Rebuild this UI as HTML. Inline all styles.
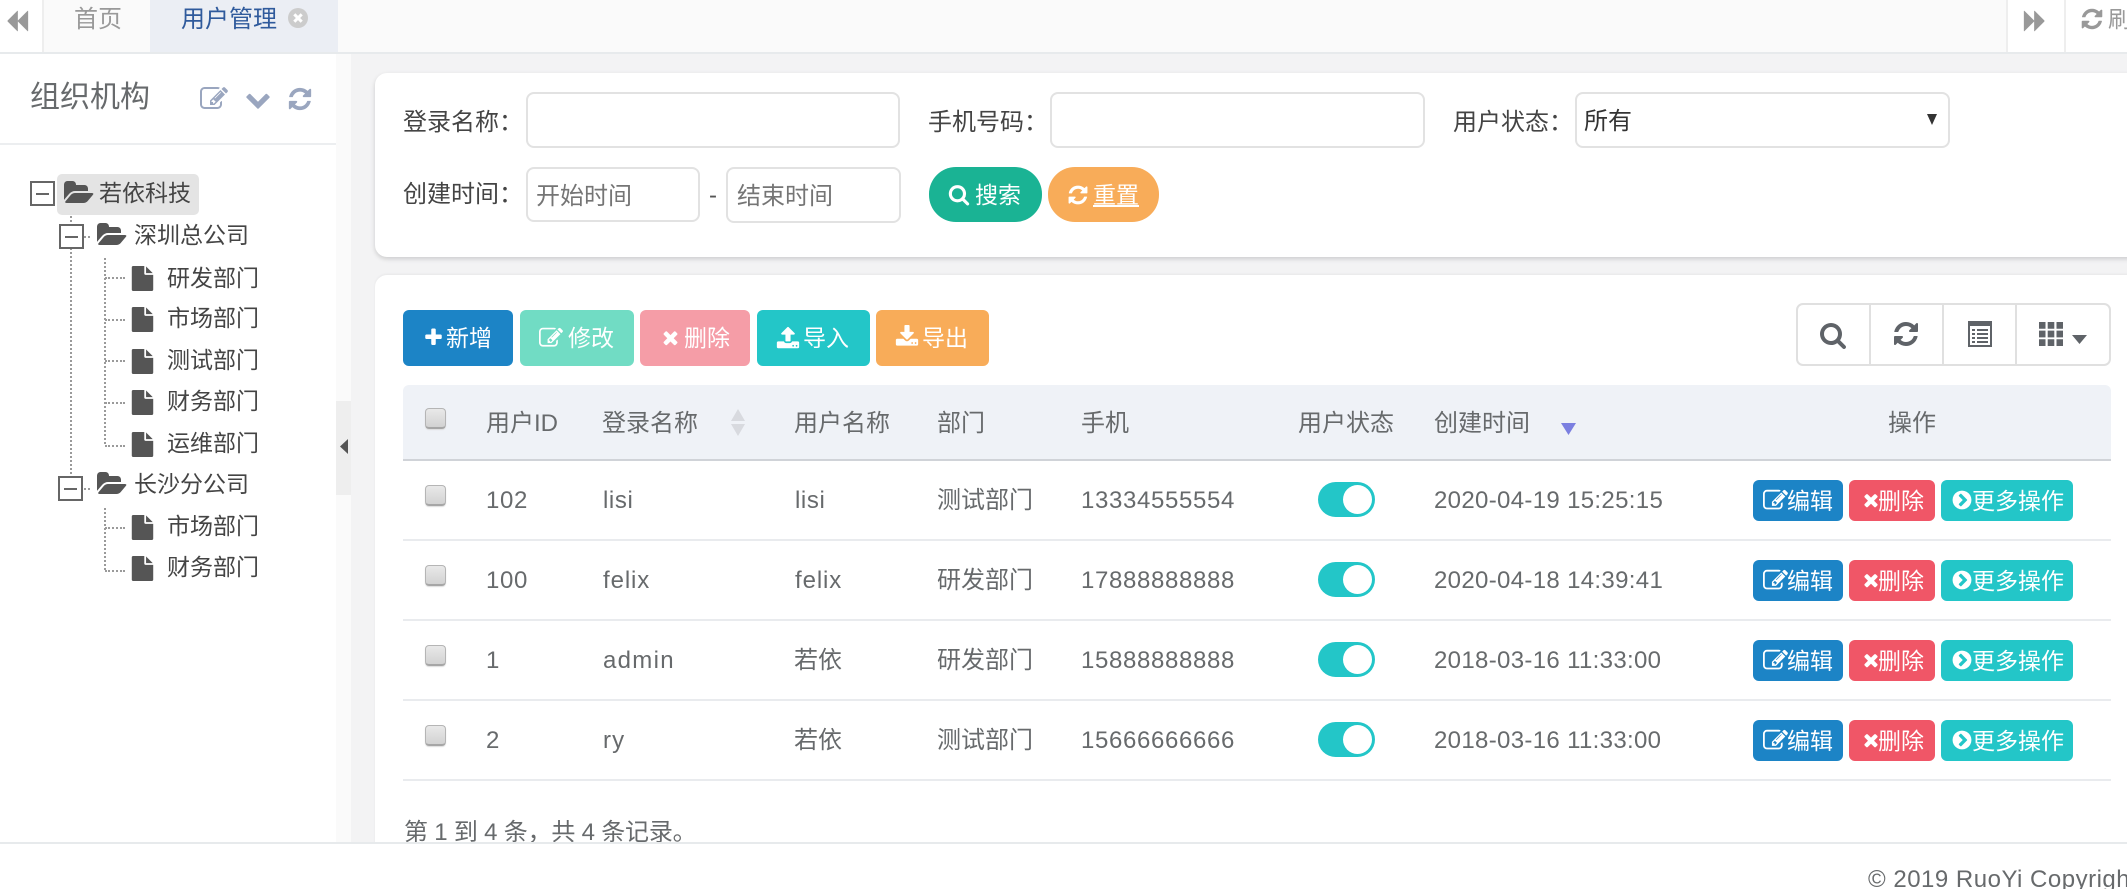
<!DOCTYPE html>
<html lang="zh-CN">
<head>
<meta charset="utf-8">
<title>用户管理</title>
<style>
html,body{margin:0;padding:0;width:2127px;height:889px;overflow:hidden;background:#fff;}
body{position:relative;font-family:"Liberation Sans","Noto Sans CJK SC",sans-serif;color:#676a6c;}
.a{position:absolute;box-sizing:border-box;}
.t{position:absolute;white-space:nowrap;line-height:1;font-size:24px;}
svg.i{position:absolute;fill:currentColor;overflow:visible;}
#wrap{position:absolute;left:0;top:0;width:2127px;height:842px;overflow:hidden;}
.card{position:absolute;background:#fff;border-radius:12px 0 0 12px;left:375px;width:1760px;}
.inp{position:absolute;box-sizing:border-box;background:#fff;border:2px solid #e2e2e2;border-radius:8px;}
.btn{position:absolute;height:56px;top:310px;border-radius:6px;color:#fff;}
.btn .t,.sb .t{color:#fff;font-size:23px;}
.lab{color:#444;font-size:24px;}
.tr{color:#444;font-size:23px;}
.cb{position:absolute;left:425px;width:21px;height:21px;box-sizing:border-box;border:1px solid #b5b5b5;border-bottom:2px solid #a6a6a6;border-radius:4px;background:linear-gradient(#e9e9e9,#d2d2d2);box-shadow:0 1px 1px #ddd;}
.row{position:absolute;left:403px;width:1708px;height:80px;}
.line{position:absolute;left:403px;width:1708px;height:2px;background:#e9ebee;}
.sb{position:absolute;top:20px;height:41px;border-radius:6px;}
.vd{position:absolute;border-left:2px dotted #9a9a9a;width:0;}
.hd{position:absolute;border-top:2px dotted #9a9a9a;height:0;}
.box{position:absolute;width:25px;height:25px;box-sizing:border-box;border:2px solid #666;background:#fff;}
.box:after{content:"";position:absolute;left:4px;right:4px;top:10px;height:2px;background:#666;}
.file,.folder{color:#555;}
</style>
</head>
<body>
<svg width="0" height="0" style="position:absolute">
<defs>
<symbol id="refresh" viewBox="0 0 1792 1792"><path d="M1639 1056q0 5-1 7-64 268-268 434.500t-478 166.500q-146 0-282.500-55t-243.500-157l-129 129q-19 19-45 19t-45-19-19-45v-448q0-26 19-45t45-19h448q26 0 45 19t19 45-19 45l-137 137q71 66 161 102t187 36q134 0 250-65t186-179q11-17 53-117 8-23 30-23h192q13 0 22.500 9.500t9.500 22.500zm25-800v448q0 26-19 45t-45 19h-448q-26 0-45-19t-19-45 19-45l138-138q-148-137-349-137-134 0-250 65t-186 179q-11 17-53 117-8 23-30 23h-199q-13 0-22.500-9.500t-9.500-22.500v-7q65-268 270-434.500t480-166.500q146 0 284 55.500t245 156.500l130-129q19-19 45-19t45 19 19 45z"/></symbol>
<symbol id="search" viewBox="0 0 1792 1792"><path d="M1216 832q0-185-131.500-316.500t-316.500-131.500-316.500 131.500-131.500 316.500 131.500 316.500 316.500 131.500 316.500-131.500 131.500-316.500zm512 832q0 52-38 90t-90 38q-54 0-90-38l-343-342q-179 124-399 124-143 0-273.500-55.500t-225-150-150-225-55.500-273.500 55.500-273.500 150-225 225-150 273.500-55.500 273.500 55.500 225 150 150 225 55.500 273.500q0 220-124 399l343 343q37 37 37 90z"/></symbol>
<symbol id="plus" viewBox="0 0 1792 1792"><path d="M1600 736v192q0 40-28 68t-68 28h-416v416q0 40-28 68t-68 28h-192q-40 0-68-28t-28-68v-416h-416q-40 0-68-28t-28-68v-192q0-40 28-68t68-28h416v-416q0-40 28-68t68-28h192q40 0 68 28t28 68v416h416q40 0 68 28t28 68z"/></symbol>
<symbol id="times" viewBox="0 0 1792 1792"><path d="M1490 1322q0 40-28 68l-136 136q-28 28-68 28t-68-28l-294-294-294 294q-28 28-68 28t-68-28l-136-136q-28-28-28-68t28-68l294-294-294-294q-28-28-28-68t28-68l136-136q28-28 68-28t68 28l294 294 294-294q28-28 68-28t68 28l136 136q28 28 28 68t-28 68l-294 294 294 294q28 28 28 68z"/></symbol>
<symbol id="edit" viewBox="0 0 1792 1792"><path d="M888 1184l116-116-152-152-116 116v56h96v96h56zm440-720q-16-16-33 1l-350 350q-17 17-1 33t33-1l350-350q17-17 1-33zm80 594v190q0 119-84.500 203.500t-203.500 84.500h-832q-119 0-203.500-84.500t-84.500-203.500v-832q0-119 84.500-203.500t203.500-84.500h832q63 0 117 25 15 7 18 23 3 17-9 29l-49 49q-14 14-32 8-23-6-45-6h-832q-66 0-113 47t-47 113v832q0 66 47 113t113 47h832q66 0 113-47t47-113v-126q0-13 9-22l64-64q15-15 35-7t20 29zm-96-738l288 288-672 672h-288v-288zm444 132l-92 92-288-288 92-92q28-28 68-28t68 28l152 152q28 28 28 68t-28 68z"/></symbol>
<symbol id="chev" viewBox="0 0 1792 1792"><path d="M1683 808l-742 741q-19 19-45 19t-45-19l-742-741q-19-19-19-45.500t19-45.500l166-165q19-19 45-19t45 19l531 531 531-531q19-19 45-19t45 19l166 165q19 19 19 45.500t-19 45.500z"/></symbol>
<symbol id="folder" viewBox="0 0 1920 1792"><path d="M1879 952q0 31-31 66l-336 396q-43 51-120.500 86.500t-143.500 35.500h-1088q-34 0-60.500-13t-26.500-43q0-31 31-66l336-396q43-51 120.500-86.500t143.500-35.500h1088q34 0 60.500 13t26.500 43zm-343-344v160h-832q-94 0-197 47.500t-164 119.500l-337 396-5 6q0-4-.5-12.500t-.5-12.500v-960q0-92 66-158t158-66h320q92 0 158 66t66 158v32h544q92 0 158 66t66 158z"/></symbol>
<symbol id="file" viewBox="0 0 1792 1792"><path d="M1152 512v-472q22 14 36 28l408 408q14 14 28 36h-472zm-128 32q0 40 28 68t68 28h544v1056q0 40-28 68t-68 28h-1344q-40 0-68-28t-28-68v-1600q0-40 28-68t68-28h800v544z"/></symbol>
<symbol id="upload" viewBox="0 0 1792 1792"><path d="M1344 1472q0-26-19-45t-45-19-45 19-19 45 19 45 45 19 45-19 19-45zm256 0q0-26-19-45t-45-19-45 19-19 45 19 45 45 19 45-19 19-45zm128-224v320q0 40-28 68t-68 28h-1472q-40 0-68-28t-28-68v-320q0-40 28-68t68-28h427q21 56 70.500 92t110.500 36h256q61 0 110.500-36t70.500-92h427q40 0 68 28t28 68zm-325-648q-17 40-59 40h-256v448q0 26-19 45t-45 19h-256q-26 0-45-19t-19-45v-448h-256q-42 0-59-40-17-39 14-69l448-448q18-19 45-19t45 19l448 448q31 30 14 69z"/></symbol>
<symbol id="download" viewBox="0 0 1792 1792"><path d="M1344 1344q0-26-19-45t-45-19-45 19-19 45 19 45 45 19 45-19 19-45zm256 0q0-26-19-45t-45-19-45 19-19 45 19 45 45 19 45-19 19-45zm128-224v320q0 40-28 68t-68 28h-1472q-40 0-68-28t-28-68v-320q0-40 28-68t68-28h465l135 136q58 56 136 56t136-56l136-136h464q40 0 68 28t28 68zm-325-569q17 41-14 70l-448 448q-18 19-45 19t-45-19l-448-448q-31-29-14-70 17-39 59-39h256v-448q0-26 19-45t45-19h256q26 0 45 19t19 45v448h256q42 0 59 39z"/></symbol>
<symbol id="more" viewBox="0 0 1792 1792"><path d="M845 1395l454-454q19-19 19-45t-19-45l-454-454q-19-19-45-19t-45 19l-102 102q-19 19-19 45t19 45l307 307-307 307q-19 19-19 45t19 45l102 102q19 19 45 19t45-19zm819-499q0 209-103 385.500t-279.500 279.500-385.500 103-385.500-103-279.500-279.500-103-385.500 103-385.500 279.500-279.500 385.500-103 385.500 103 279.500 279.500 103 385.500z"/></symbol>
<symbol id="back" viewBox="0 0 1792 1792"><path d="M1683 141q19-19 32-13t13 32v1472q0 26-13 32t-32-13l-710-710q-9-9-13-19v710q0 26-13 32t-32-13l-710-710q-19-19-19-45t19-45l710-710q19-19 32-13t13 32v710q4-10 13-19z"/></symbol>
<symbol id="fwd" viewBox="0 0 1792 1792"><path d="M109 1651q-19 19-32 13t-13-32v-1472q0-26 13-32t32 13l710 710q9 9 13 19v-710q0-26 13-32t32 13l710 710q19 19 19 45t-19 45l-710 710q-19 19-32 13t-13-32v-710q-4 10-13 19z"/></symbol>
<symbol id="th" viewBox="0 0 24 24"><path d="M0 0h6.500v6.800h-6.500zM8.700 0h6.600v6.800h-6.600zM17.500 0h6.500v6.800h-6.500zM0 8.600h6.500v6.800h-6.500zM8.700 8.600h6.600v6.800h-6.600zM17.500 8.600h6.500v6.800h-6.500zM0 17.200h6.500v6.800h-6.500zM8.700 17.200h6.600v6.800h-6.600zM17.500 17.200h6.500v6.800h-6.500z"/></symbol>
<symbol id="list" viewBox="0 0 24 26"><path fill-rule="evenodd" d="M0 0h24v26h-24zM2 5v19h20v-19zM4 8h3v2h-3zM9 8h11v2h-11zM4 12h3v2h-3zM9 12h11v2h-11zM4 16h3v2h-3zM9 16h11v2h-11zM4 20h3v2h-3zM9 20h11v2h-11z"/></symbol>
</defs>
</svg>

<div id="wrap">
  <!-- backgrounds -->
  <div class="a" style="left:336px;top:54px;width:15px;height:800px;background:#fafafa"></div>
  <div class="a" style="left:351px;top:54px;width:1776px;height:800px;background:#f3f3f4"></div>

  <!-- tab bar -->
  <div class="a" style="left:0;top:0;width:2127px;height:54px;background:#fafafa;border-bottom:2px solid #e7eaec"></div>
  <div class="a" style="left:0;top:0;width:44px;height:52px;background:#fff;border-right:2px solid #eee"></div>
  <svg class="i" style="left:5px;top:9px;width:24px;height:24px;color:#999"><use href="#back"/></svg>
  <div class="t" style="left:74px;top:8px;color:#999">首页</div>
  <div class="a" style="left:150px;top:0;width:188px;height:52px;background:#ebeef4"></div>
  <div class="t" style="left:181px;top:8px;color:#2f5a9c">用户管理</div>
  <svg class="i" style="left:288px;top:8px;width:20px;height:20px" viewBox="0 0 20 20"><circle cx="10" cy="10" r="10" fill="#ccc"/><path d="M6.300 6.300l7.400 7.400M13.700 6.300l-7.400 7.400" stroke="#fff" stroke-width="3" fill="none"/></svg>
  <div class="a" style="left:2006px;top:0;width:60px;height:52px;background:#fff;border-left:2px solid #eee;border-right:2px solid #eee"></div>
  <div class="a" style="left:2066px;top:0;width:61px;height:52px;background:#fff"></div>
  <svg class="i" style="left:2023px;top:9px;width:24px;height:24px;color:#999"><use href="#fwd"/></svg>
  <svg class="i" style="left:2080px;top:7px;width:24px;height:24px;color:#999"><use href="#refresh"/></svg>
  <div class="t" style="left:2108px;top:8px;color:#999;font-size:23px">刷新</div>

  <!-- left panel -->
  <div class="a" style="left:0;top:54px;width:336px;height:800px;background:#fff"></div>
  <div class="a" style="left:336px;top:401px;width:15px;height:94px;background:#eee"></div>
  <svg class="i" style="left:340px;top:439px;width:8px;height:15px" viewBox="0 0 8 15"><path d="M8 0v15L0 7.500z" fill="#555"/></svg>
  <div class="t" style="left:30px;top:83px;font-size:30px;color:#676a6c">组织机构</div>
  <svg class="i" style="left:200px;top:85px;width:28px;height:28px;color:#9aa6bf"><use href="#edit"/></svg>
  <svg class="i" style="left:245px;top:86px;width:26px;height:26px;color:#9aa6bf"><use href="#chev"/></svg>
  <svg class="i" style="left:287px;top:86px;width:26px;height:26px;color:#9aa6bf"><use href="#refresh"/></svg>
  <div class="a" style="left:0;top:143px;width:336px;height:2px;background:#eceef0"></div>

  <!-- tree -->
  <div class="vd" style="left:70px;top:216px;height:258px"></div>
  <div class="vd" style="left:104px;top:258px;height:186px"></div>
  <div class="vd" style="left:104px;top:508px;height:62px"></div>
  <div class="hd" style="left:105px;top:277px;width:20px"></div>
  <div class="hd" style="left:105px;top:319px;width:20px"></div>
  <div class="hd" style="left:105px;top:360px;width:20px"></div>
  <div class="hd" style="left:105px;top:402px;width:20px"></div>
  <div class="hd" style="left:105px;top:445px;width:20px"></div>
  <div class="hd" style="left:105px;top:527px;width:20px"></div>
  <div class="hd" style="left:105px;top:570px;width:20px"></div>
  <div class="hd" style="left:84px;top:236px;width:6px"></div>
  <div class="hd" style="left:84px;top:488px;width:6px"></div>

  <div class="a" style="left:57px;top:174px;width:142px;height:41px;background:#e4e4e4;border-radius:5px"></div>
  <div class="box" style="left:30px;top:181px"></div>
  <svg class="i folder" style="left:64px;top:179px;width:30px;height:28px"><use href="#folder"/></svg>
  <div class="t tr" style="left:99px;top:182px">若依科技</div>

  <div class="box" style="left:59px;top:224px"></div>
  <svg class="i folder" style="left:97px;top:221px;width:30px;height:28px"><use href="#folder"/></svg>
  <div class="t tr" style="left:134px;top:224px">深圳总公司</div>

  <svg class="i file" style="left:130px;top:266px;width:25px;height:25px"><use href="#file"/></svg>
  <div class="t tr" style="left:167px;top:267px">研发部门</div>
  <svg class="i file" style="left:130px;top:307px;width:25px;height:25px"><use href="#file"/></svg>
  <div class="t tr" style="left:167px;top:307px">市场部门</div>
  <svg class="i file" style="left:130px;top:349px;width:25px;height:25px"><use href="#file"/></svg>
  <div class="t tr" style="left:167px;top:349px">测试部门</div>
  <svg class="i file" style="left:130px;top:390px;width:25px;height:25px"><use href="#file"/></svg>
  <div class="t tr" style="left:167px;top:390px">财务部门</div>
  <svg class="i file" style="left:130px;top:432px;width:25px;height:25px"><use href="#file"/></svg>
  <div class="t tr" style="left:167px;top:432px">运维部门</div>

  <div class="box" style="left:58px;top:476px"></div>
  <svg class="i folder" style="left:97px;top:470px;width:30px;height:28px"><use href="#folder"/></svg>
  <div class="t tr" style="left:134px;top:473px">长沙分公司</div>

  <svg class="i file" style="left:130px;top:515px;width:25px;height:25px"><use href="#file"/></svg>
  <div class="t tr" style="left:167px;top:515px">市场部门</div>
  <svg class="i file" style="left:130px;top:556px;width:25px;height:25px"><use href="#file"/></svg>
  <div class="t tr" style="left:167px;top:556px">财务部门</div>

  <!-- search card -->
  <div class="card" style="top:73px;height:184px;box-shadow:0 2px 5px rgba(0,0,0,.16)"></div>
  <div class="t lab" style="left:403px;top:111px">登录名称：</div>
  <div class="inp" style="left:526px;top:92px;width:374px;height:56px"></div>
  <div class="t lab" style="left:928px;top:111px">手机号码：</div>
  <div class="inp" style="left:1050px;top:92px;width:375px;height:56px"></div>
  <div class="t lab" style="left:1453px;top:111px">用户状态：</div>
  <div class="inp" style="left:1575px;top:92px;width:375px;height:56px"></div>
  <div class="t" style="left:1584px;top:110px;color:#333">所有</div>
  <svg class="i" style="left:1927px;top:114px;width:10px;height:11px" viewBox="0 0 10 11"><path d="M0 0h10L5 11z" fill="#333"/></svg>

  <div class="t lab" style="left:403px;top:183px">创建时间：</div>
  <div class="inp" style="left:526px;top:167px;width:174px;height:55px"></div>
  <div class="t" style="left:536px;top:185px;color:#757575">开始时间</div>
  <div class="t" style="left:709px;top:184px;color:#555">-</div>
  <div class="inp" style="left:726px;top:167px;width:175px;height:56px"></div>
  <div class="t" style="left:737px;top:185px;color:#757575">结束时间</div>
  <div class="a" style="left:929px;top:167px;width:113px;height:55px;background:#1ab394;border-radius:27px"></div>
  <svg class="i" style="left:948px;top:183px;width:22px;height:23px;color:#fff"><use href="#search"/></svg>
  <div class="t" style="left:975px;top:184px;color:#fff;font-size:23px">搜索</div>
  <div class="a" style="left:1048px;top:167px;width:111px;height:55px;background:#f8ac59;border-radius:27px"></div>
  <svg class="i" style="left:1067px;top:184px;width:22px;height:22px;color:#fff"><use href="#refresh"/></svg>
  <div class="t" style="left:1093px;top:184px;color:#fff;font-size:23px;text-decoration:underline">重置</div>

  <!-- table card -->
  <div class="card" style="top:275px;height:620px;box-shadow:0 -1px 2px rgba(0,0,0,.05)"></div>

  <div class="btn" style="left:403px;width:110px;background:#1c84c6">
    <svg class="i" style="left:20px;top:17px;width:21px;height:21px;color:#fff"><use href="#plus"/></svg>
    <div class="t" style="left:43px;top:17px">新增</div>
  </div>
  <div class="btn" style="left:520px;width:114px;background:#71dcc4">
    <svg class="i" style="left:19px;top:16px;width:24px;height:24px;color:#fff"><use href="#edit"/></svg>
    <div class="t" style="left:48px;top:17px">修改</div>
  </div>
  <div class="btn" style="left:640px;width:110px;background:#f59da7">
    <svg class="i" style="left:20px;top:17px;width:21px;height:21px;color:#fff"><use href="#times"/></svg>
    <div class="t" style="left:44px;top:17px">删除</div>
  </div>
  <div class="btn" style="left:757px;width:113px;background:#23c6c8">
    <svg class="i" style="left:19px;top:16px;width:24px;height:24px;color:#fff"><use href="#upload"/></svg>
    <div class="t" style="left:46px;top:17px">导入</div>
  </div>
  <div class="btn" style="left:876px;width:113px;background:#f8ac59">
    <svg class="i" style="left:19px;top:15px;width:24px;height:24px;color:#fff"><use href="#download"/></svg>
    <div class="t" style="left:46px;top:17px">导出</div>
  </div>

  <!-- toolbar -->
  <div class="a" style="left:1796px;top:303px;width:315px;height:63px;background:#fff;border:2px solid #e0e0e0;border-radius:7px"></div>
  <div class="a" style="left:1869px;top:304px;width:2px;height:61px;background:#e0e0e0"></div>
  <div class="a" style="left:1942px;top:304px;width:2px;height:61px;background:#e0e0e0"></div>
  <div class="a" style="left:2015px;top:304px;width:2px;height:61px;background:#e0e0e0"></div>
  <svg class="i" style="left:1819px;top:321px;width:28px;height:28px;color:#5f6368"><use href="#search"/></svg>
  <svg class="i" style="left:1892px;top:320px;width:28px;height:28px;color:#5f6368"><use href="#refresh"/></svg>
  <svg class="i" style="left:1968px;top:321px;width:24px;height:26px;color:#5f6368"><use href="#list"/></svg>
  <svg class="i" style="left:2039px;top:322px;width:24px;height:24px;color:#5f6368"><use href="#th"/></svg>
  <svg class="i" style="left:2072px;top:335px;width:15px;height:9px" viewBox="0 0 15 9"><path d="M0 0h15L7.500 9z" fill="#5f6368"/></svg>

  <!-- table header -->
  <div class="a" style="left:403px;top:385px;width:1708px;height:76px;background:#eff2f7;border-bottom:2px solid #d0d3d8;border-radius:6px 6px 0 0"></div>
  <div class="cb" style="top:408px"></div>
  <div class="t" style="left:486px;top:412px">用户ID</div>
  <div class="t" style="left:602px;top:412px">登录名称</div>
  <svg class="i" style="left:730px;top:409px;width:16px;height:27px" viewBox="0 0 16 27"><path d="M8 0l7 12H1zM1 15h14l-7 12z" fill="#d8dadf"/></svg>
  <div class="t" style="left:794px;top:412px">用户名称</div>
  <div class="t" style="left:937px;top:412px">部门</div>
  <div class="t" style="left:1081px;top:412px">手机</div>
  <div class="t" style="left:1298px;top:412px">用户状态</div>
  <div class="t" style="left:1434px;top:412px">创建时间</div>
  <svg class="i" style="left:1561px;top:423px;width:15px;height:12px" viewBox="0 0 15 12"><path d="M0 0h15L7.500 12z" fill="#7b7fe0"/></svg>
  <div class="t" style="left:1888px;top:412px">操作</div>

  <!-- rows -->
  <div class="cb" style="top:485px"></div>
  <div class="t" style="left:486px;top:489px;letter-spacing:.65px">102</div>
  <div class="t" style="left:603px;top:489px;letter-spacing:.6px">lisi</div>
  <div class="t" style="left:795px;top:489px;letter-spacing:.6px">lisi</div>
  <div class="t" style="left:937px;top:489px">测试部门</div>
  <div class="t" style="left:1081px;top:489px;letter-spacing:.65px">13334555554</div>
  <div class="a" style="left:1318px;top:482px;width:57px;height:35px;border-radius:18px;background:#23c6c8"></div>
  <div class="a" style="left:1343px;top:485px;width:29px;height:29px;border-radius:50%;background:#fff"></div>
  <div class="t" style="left:1434px;top:489px;letter-spacing:.33px">2020-04-19 15:25:15</div>
  <div class="line" style="top:539px"></div>

  <div class="cb" style="top:565px"></div>
  <div class="t" style="left:486px;top:569px;letter-spacing:.65px">100</div>
  <div class="t" style="left:603px;top:569px;letter-spacing:.9px">felix</div>
  <div class="t" style="left:795px;top:569px;letter-spacing:.9px">felix</div>
  <div class="t" style="left:937px;top:569px">研发部门</div>
  <div class="t" style="left:1081px;top:569px;letter-spacing:.65px">17888888888</div>
  <div class="a" style="left:1318px;top:562px;width:57px;height:35px;border-radius:18px;background:#23c6c8"></div>
  <div class="a" style="left:1343px;top:565px;width:29px;height:29px;border-radius:50%;background:#fff"></div>
  <div class="t" style="left:1434px;top:569px;letter-spacing:.33px">2020-04-18 14:39:41</div>
  <div class="line" style="top:619px"></div>

  <div class="cb" style="top:645px"></div>
  <div class="t" style="left:486px;top:649px">1</div>
  <div class="t" style="left:603px;top:649px;letter-spacing:1.3px">admin</div>
  <div class="t" style="left:794px;top:649px">若依</div>
  <div class="t" style="left:937px;top:649px">研发部门</div>
  <div class="t" style="left:1081px;top:649px;letter-spacing:.65px">15888888888</div>
  <div class="a" style="left:1318px;top:642px;width:57px;height:35px;border-radius:18px;background:#23c6c8"></div>
  <div class="a" style="left:1343px;top:645px;width:29px;height:29px;border-radius:50%;background:#fff"></div>
  <div class="t" style="left:1434px;top:649px;letter-spacing:.33px">2018-03-16 11:33:00</div>
  <div class="line" style="top:699px"></div>

  <div class="cb" style="top:725px"></div>
  <div class="t" style="left:486px;top:729px">2</div>
  <div class="t" style="left:603px;top:729px;letter-spacing:1.1px">ry</div>
  <div class="t" style="left:794px;top:729px">若依</div>
  <div class="t" style="left:937px;top:729px">测试部门</div>
  <div class="t" style="left:1081px;top:729px;letter-spacing:.65px">15666666666</div>
  <div class="a" style="left:1318px;top:722px;width:57px;height:35px;border-radius:18px;background:#23c6c8"></div>
  <div class="a" style="left:1343px;top:725px;width:29px;height:29px;border-radius:50%;background:#fff"></div>
  <div class="t" style="left:1434px;top:729px;letter-spacing:.33px">2018-03-16 11:33:00</div>
  <div class="line" style="top:779px"></div>

  <!-- row action buttons -->
  <div class="row" style="top:460px">
    <div class="sb" style="left:1350px;width:90px;background:#1c84c6"><svg class="i" style="left:10px;top:8px;width:25px;height:25px;color:#fff"><use href="#edit"/></svg><div class="t" style="left:34px;top:10px">编辑</div></div>
    <div class="sb" style="left:1446px;width:86px;background:#f05667"><svg class="i" style="left:12px;top:10px;width:20px;height:20px;color:#fff"><use href="#times"/></svg><div class="t" style="left:29px;top:10px">删除</div></div>
    <div class="sb" style="left:1538px;width:132px;background:#23c6c8"><svg class="i" style="left:10px;top:9px;width:22px;height:22px;color:#fff"><use href="#more"/></svg><div class="t" style="left:31px;top:10px">更多操作</div></div>
  </div>
  <div class="row" style="top:540px">
    <div class="sb" style="left:1350px;width:90px;background:#1c84c6"><svg class="i" style="left:10px;top:8px;width:25px;height:25px;color:#fff"><use href="#edit"/></svg><div class="t" style="left:34px;top:10px">编辑</div></div>
    <div class="sb" style="left:1446px;width:86px;background:#f05667"><svg class="i" style="left:12px;top:10px;width:20px;height:20px;color:#fff"><use href="#times"/></svg><div class="t" style="left:29px;top:10px">删除</div></div>
    <div class="sb" style="left:1538px;width:132px;background:#23c6c8"><svg class="i" style="left:10px;top:9px;width:22px;height:22px;color:#fff"><use href="#more"/></svg><div class="t" style="left:31px;top:10px">更多操作</div></div>
  </div>
  <div class="row" style="top:620px">
    <div class="sb" style="left:1350px;width:90px;background:#1c84c6"><svg class="i" style="left:10px;top:8px;width:25px;height:25px;color:#fff"><use href="#edit"/></svg><div class="t" style="left:34px;top:10px">编辑</div></div>
    <div class="sb" style="left:1446px;width:86px;background:#f05667"><svg class="i" style="left:12px;top:10px;width:20px;height:20px;color:#fff"><use href="#times"/></svg><div class="t" style="left:29px;top:10px">删除</div></div>
    <div class="sb" style="left:1538px;width:132px;background:#23c6c8"><svg class="i" style="left:10px;top:9px;width:22px;height:22px;color:#fff"><use href="#more"/></svg><div class="t" style="left:31px;top:10px">更多操作</div></div>
  </div>
  <div class="row" style="top:700px">
    <div class="sb" style="left:1350px;width:90px;background:#1c84c6"><svg class="i" style="left:10px;top:8px;width:25px;height:25px;color:#fff"><use href="#edit"/></svg><div class="t" style="left:34px;top:10px">编辑</div></div>
    <div class="sb" style="left:1446px;width:86px;background:#f05667"><svg class="i" style="left:12px;top:10px;width:20px;height:20px;color:#fff"><use href="#times"/></svg><div class="t" style="left:29px;top:10px">删除</div></div>
    <div class="sb" style="left:1538px;width:132px;background:#23c6c8"><svg class="i" style="left:10px;top:9px;width:22px;height:22px;color:#fff"><use href="#more"/></svg><div class="t" style="left:31px;top:10px">更多操作</div></div>
  </div>

  <div class="t" style="left:404px;top:821px;letter-spacing:-.2px">第 1 到 4 条，共 4 条记录。</div>
</div>

<!-- footer -->
<div class="a" style="left:0;top:842px;width:2127px;height:47px;background:#fff;border-top:2px solid #e7eaec;overflow:hidden">
  <div class="t" style="left:1868px;top:24px;font-size:24px;letter-spacing:.5px;color:#676a6c">© 2019 RuoYi Copyright</div>
</div>
</body>
</html>
